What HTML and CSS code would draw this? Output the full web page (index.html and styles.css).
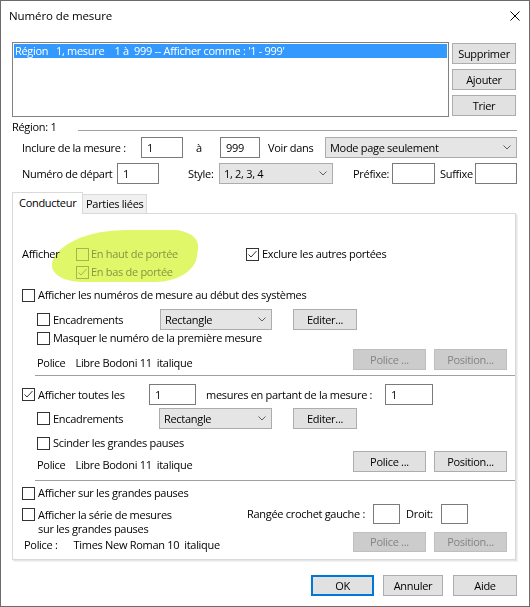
FILE: index.html
```html
<!DOCTYPE html>
<html lang="fr">
<head>
  <meta charset="UTF-8" />
  <title>Numéro de mesure</title>
  <link rel="stylesheet" href="styles.css">
</head>
<body>
  <div class="window">
    <!-- ========== TITLE BAR ========== -->
    <div class="titlebar">
      <span class="title">Numéro de mesure</span>
      <svg class="close" width="10" height="10" viewBox="0 0 10 10">
        <path d="M0.5 0.5 L9.5 9.5 M9.5 0.5 L0.5 9.5" stroke="#000" stroke-width="1" fill="none" />
      </svg>
    </div>

    <div class="content">
      <!-- ========== REGION LIST ========== -->
      <div class="top">
        <div class="listbox">
          <div class="list-item">Région   1, mesure    1 à  999 -- Afficher comme : '1 - 999'</div>
        </div>
        <div class="side-buttons">
          <button class="btn">Supprimer</button>
          <button class="btn">Ajouter</button>
          <button class="btn">Trier</button>
        </div>
      </div>

      <div class="region-row">
        <span class="region-label">Région: 1</span>
        <span class="region-line"></span>
      </div>

      <div class="field-row row-1">
        <span class="lbl w-119">Inclure de la mesure :</span>
        <span class="input w-42">1</span>
        <span class="lbl ml-13 w-24">à</span>
        <span class="input w-40">999</span>
        <span class="lbl ml-8 w-57">Voir dans</span>
        <span class="select w-192">Mode page seulement<svg class="chev" width="8" height="5" viewBox="0 0 8 5"><path d="M0.5 0.5 L4 4 L7.5 0.5" stroke="#5f5f5f" fill="none" /></svg></span>
      </div>

      <div class="field-row row-2">
        <span class="lbl w-95">Numéro de départ</span>
        <span class="input w-42">1</span>
        <span class="lbl ml-29 w-31">Style:</span>
        <span class="select w-114">1, 2, 3, 4<svg class="chev" width="8" height="5" viewBox="0 0 8 5"><path d="M0.5 0.5 L4 4 L7.5 0.5" stroke="#5f5f5f" fill="none" /></svg></span>
        <span class="lbl ml-20 w-39">Préfixe:</span>
        <span class="input w-43"></span>
        <span class="lbl ml-5 w-35">Suffixe</span>
        <span class="input w-42"></span>
      </div>

      <!-- ========== TABS ========== -->
      <div class="tab-strip">
        <div class="tab active">Conducteur</div>
        <div class="tab">Parties liées</div>
      </div>

      <div class="panel">
        <div class="marker"></div>

        <div class="afficher-row">
          <span class="afficher-label">Afficher</span>
          <div class="afficher-group">
            <div class="check-line disabled">
              <span class="cb"></span>
              <span>En haut de portée</span>
            </div>
            <div class="check-line disabled">
              <span class="cb"><svg width="11" height="11" viewBox="0 0 11 11"><path d="M1.5 5.5 L4 8 L9.5 2" stroke="currentColor" fill="none" /></svg></span>
              <span>En bas de portée</span>
            </div>
          </div>
          <div class="check-line">
            <span class="cb"><svg width="11" height="11" viewBox="0 0 11 11"><path d="M1.5 5.5 L4 8 L9.5 2" stroke="currentColor" fill="none" /></svg></span>
            <span>Exclure les autres portées</span>
          </div>
        </div>

        <!-- numbers at start of systems -->
        <div class="check-line row-b">
          <span class="cb"></span>
          <span>Afficher les numéros de mesure au début des systèmes</span>
        </div>

        <div class="panel-row row-c indent">
          <div class="check-line w-123">
            <span class="cb"></span>
            <span>Encadrements</span>
          </div>
          <span class="select w-112">Rectangle<svg class="chev" width="8" height="5" viewBox="0 0 8 5"><path d="M0.5 0.5 L4 4 L7.5 0.5" stroke="#5f5f5f" fill="none" /></svg></span>
          <button class="btn ml-21">Editer...</button>
        </div>

        <div class="check-line row-d indent">
          <span class="cb"></span>
          <span>Masquer le numéro de la première mesure</span>
        </div>

        <div class="panel-row row-e">
          <span class="font-info indent-text">Police<span class="gap-10">Libre Bodoni 11</span><span class="gap-5">italique</span></span>
          <div class="font-buttons">
            <button class="btn btn-wide" disabled>Police ...</button>
            <button class="btn btn-wide" disabled>Position...</button>
          </div>
        </div>

        <div class="separator sep-1"></div>

        <!-- every n measures -->
        <div class="panel-row row-f">
          <div class="check-line w-127">
            <span class="cb"><svg width="11" height="11" viewBox="0 0 11 11"><path d="M1.5 5.5 L4 8 L9.5 2" stroke="currentColor" fill="none" /></svg></span>
            <span>Afficher toutes les</span>
          </div>
          <span class="input w-47">1</span>
          <span class="lbl ml-10 w-179">mesures en partant de la mesure :</span>
          <span class="input w-48">1</span>
        </div>

        <div class="panel-row row-g indent">
          <div class="check-line w-122">
            <span class="cb"></span>
            <span>Encadrements</span>
          </div>
          <span class="select w-113">Rectangle<svg class="chev" width="8" height="5" viewBox="0 0 8 5"><path d="M0.5 0.5 L4 4 L7.5 0.5" stroke="#5f5f5f" fill="none" /></svg></span>
          <button class="btn ml-21">Editer...</button>
        </div>

        <div class="check-line row-h indent">
          <span class="cb"></span>
          <span>Scinder les grandes pauses</span>
        </div>

        <div class="panel-row row-i">
          <span class="font-info indent-text">Police<span class="gap-10">Libre Bodoni 11</span><span class="gap-5">italique</span></span>
          <div class="font-buttons">
            <button class="btn btn-wide">Police ...</button>
            <button class="btn btn-wide">Position...</button>
          </div>
        </div>

        <div class="separator sep-2"></div>

        <!-- multi-measure rests -->
        <div class="check-line row-j">
          <span class="cb"></span>
          <span>Afficher sur les grandes pauses</span>
        </div>

        <div class="panel-row row-k">
          <div class="check-multi w-225">
            <span class="cb"></span>
            <span>Afficher la série de mesures<br>sur les grandes pauses</span>
          </div>
          <span class="lbl w-126">Rangée crochet gauche :</span>
          <span class="input w-27 small"></span>
          <span class="lbl ml-6 w-35">Droit:</span>
          <span class="input w-27 small"></span>
        </div>

        <div class="panel-row row-l">
          <span class="font-info rest-text">Police :<span class="gap-16">Times New Roman 10</span><span class="gap-5">italique</span></span>
          <div class="font-buttons">
            <button class="btn btn-wide small" disabled>Police ...</button>
            <button class="btn btn-wide small" disabled>Position...</button>
          </div>
        </div>
      </div>

      <!-- ========== FOOTER ========== -->
      <div class="footer">
        <button class="btn btn-ok">OK</button>
        <button class="btn btn-cancel">Annuler</button>
        <button class="btn btn-help">Aide</button>
      </div>
    </div>
  </div>
</body>
</html>
```

FILE: styles.css
```css
* {
  margin: 0;
  padding: 0;
  box-sizing: border-box;
}

body {
  font-family: 'Open Sans', 'Noto Sans', sans-serif;
  font-size: 11px;
  line-height: 16px;
  letter-spacing: -0.3px;
  color: #000;
  background: #fff;
}

/* =========================================
   WINDOW + TITLE BAR
   ========================================= */
.window {
  width: 530px;
  height: 607px;
  border: 1px solid #6b6b6b;
  background: #fff;
}

.titlebar {
  height: 30px;
  display: flex;
  align-items: center;
  justify-content: space-between;
  padding: 0 9px 0 8px;
}

.title {
  font-size: 11.5px;
  letter-spacing: -0.1px;
}

.content {
  padding: 0 11px;
}

/* =========================================
   CONTROLS
   ========================================= */
.btn {
  font: inherit;
  letter-spacing: inherit;
  color: #000;
  width: 64px;
  height: 21px;
  background: #e1e1e1;
  border: 1px solid #adadad;
  display: flex;
  align-items: center;
  justify-content: center;
  flex: none;
}

.btn:disabled {
  background: #cccccc;
  border-color: #bfbfbf;
  color: #838383;
}

.btn-wide {
  width: 73px;
}

.input {
  height: 21px;
  border: 1px solid #7a7a7a;
  background: #fff;
  padding-left: 5px;
  line-height: 19px;
  flex: none;
}

.select {
  height: 21px;
  background: #e5e5e5;
  border: 1px solid #acacac;
  display: flex;
  align-items: center;
  justify-content: space-between;
  padding: 0 5px 0 4px;
  flex: none;
}

.chev {
  flex: none;
}

.small {
  height: 20px;
}

.lbl {
  flex: none;
  white-space: nowrap;
}

.cb {
  width: 13px;
  height: 13px;
  border: 1px solid #333;
  background: #fff;
  color: #333;
  flex: none;
  display: flex;
}

.check-line {
  display: flex;
  align-items: center;
  gap: 3px;
  height: 18px;
  white-space: nowrap;
}

.check-line.disabled {
  color: #9a9a9a;
  gap: 2px;
}

.check-line.disabled .cb {
  border-color: #bcbcbc;
  color: #bcbcbc;
}

/* widths + left offsets */
.w-24 { width: 24px; }
.w-27 { width: 27px; }
.w-31 { width: 31px; }
.w-35 { width: 35px; }
.w-39 { width: 39px; }
.w-40 { width: 40px; }
.w-42 { width: 42px; }
.w-43 { width: 43px; }
.w-47 { width: 47px; }
.w-48 { width: 48px; }
.w-57 { width: 57px; }
.w-95 { width: 95px; }
.w-112 { width: 112px; }
.w-113 { width: 113px; }
.w-114 { width: 114px; }
.w-119 { width: 119px; }
.w-122 { width: 122px; flex: none; }
.w-123 { width: 123px; flex: none; }
.w-126 { width: 126px; }
.w-127 { width: 127px; flex: none; }
.w-179 { width: 179px; }
.w-192 { width: 192px; }
.w-225 { width: 225px; flex: none; }

.ml-5 { margin-left: 5px; }
.ml-6 { margin-left: 6px; }
.ml-8 { margin-left: 8px; }
.ml-10 { margin-left: 10px; }
.ml-13 { margin-left: 13px; }
.ml-20 { margin-left: 20px; }
.ml-21 { margin-left: 21px; }
.ml-29 { margin-left: 29px; }

/* =========================================
   REGION LIST
   ========================================= */
.top {
  display: flex;
  gap: 3px;
  margin-top: 11px;
  height: 75px;
}

.listbox {
  width: 437px;
  height: 75px;
  border: 1px solid #828282;
  padding: 1px;
}

.list-item {
  height: 14px;
  line-height: 14px;
  background: #3399ff;
  color: #fff;
  padding-left: 1px;
  white-space: pre;
}

.side-buttons {
  display: flex;
  flex-direction: column;
  gap: 5px;
  padding-top: 1px;
}

.region-row {
  display: flex;
  height: 16px;
  margin-top: 2px;
}

.region-label {
  width: 66px;
  flex: none;
}

.region-line {
  flex: 1;
  margin-top: 11px;
  margin-right: 1px;
  border-top: 1px solid #a0a0a0;
  height: 0;
}

.field-row {
  display: flex;
  align-items: center;
  height: 21px;
  padding-left: 10px;
}

.row-1 { margin-top: 2px; }
.row-2 { margin-top: 5px; }

/* =========================================
   TABS + PANEL
   ========================================= */
.tab-strip {
  display: flex;
  align-items: flex-end;
  height: 21px;
  margin-top: 8px;
}

.tab {
  height: 19px;
  padding-left: 3px;
  padding-right: 3px;
  background: #f0f0f0;
  border: 1px solid #d9d9d9;
  border-bottom: none;
  margin-left: -1px;
  line-height: 17px;
}

.tab.active {
  position: relative;
  z-index: 1;
  width: 71px;
  height: 22px;
  margin-left: 0;
  margin-bottom: -1px;
  padding-left: 6px;
  background: #fff;
  line-height: 19px;
}

.panel {
  position: relative;
  width: 504px;
  height: 347px;
  border: 1px solid #d9d9d9;
  box-shadow: 1px 1px 0 #e6e6e6, 2px 2px 0 #f2f2f2;
  padding-left: 9px;
}

/* yellow highlighter stroke over the top/bottom choice */
.marker {
  position: absolute;
  left: 40px;
  top: 16px;
  width: 144px;
  height: 52px;
  background: #e0f76a;
  border-radius: 55% 22% 30% 26% / 75% 40% 55% 40%;
  transform: skewX(-8deg);
  mix-blend-mode: multiply;
  pointer-events: none;
}

.afficher-row {
  display: flex;
  align-items: flex-start;
  margin-top: 31px;
}

.afficher-label {
  width: 54px;
  line-height: 18px;
}

.afficher-group {
  width: 170px;
  display: flex;
  flex-direction: column;
}

.panel-row {
  display: flex;
  align-items: center;
  height: 21px;
}

.indent {
  padding-left: 15px;
}

.row-b { margin-top: 5px; }
.row-c { margin-top: 5px; }
.row-d { height: 16px; }
.row-e { margin-top: 3px; align-items: flex-start; }
.row-f { margin-top: 8px; }
.row-g { margin-top: 3px; }
.row-h { margin-top: 6px; height: 16px; }
.row-i { align-items: flex-start; }
.row-j { margin-top: 4px; height: 16px; }
.row-k { margin-top: 3px; height: 28px; align-items: flex-start; }
.row-l { align-items: flex-start; }

.row-k .lbl {
  line-height: 20px;
}

.check-multi {
  display: flex;
  gap: 3px;
  margin-top: 4px;
  line-height: 14px;
}

.font-info {
  white-space: nowrap;
  margin-top: 6px;
}

.indent-text {
  margin-left: 15px;
}

.rest-text {
  margin-left: 2px;
  margin-top: 5px;
}

.gap-5 { margin-left: 5px; }
.gap-10 { margin-left: 10px; }
.gap-16 { margin-left: 16px; }

.font-buttons {
  display: flex;
  gap: 8px;
  margin-left: auto;
  margin-right: 8px;
}

.separator {
  margin-left: 13px;
  border-top: 1px solid #a0a0a0;
}

.sep-1 { margin-top: 5px; }
.sep-2 { margin-top: 8px; }

/* =========================================
   FOOTER
   ========================================= */
.footer {
  display: flex;
  justify-content: flex-end;
  margin-top: 15px;
  padding-right: 1px;
}

.btn-ok {
  width: 63px;
  border: 2px solid #0078d7;
}

.btn-cancel {
  width: 60px;
  margin-left: 9px;
}

.btn-help {
  margin-left: 10px;
}
```
